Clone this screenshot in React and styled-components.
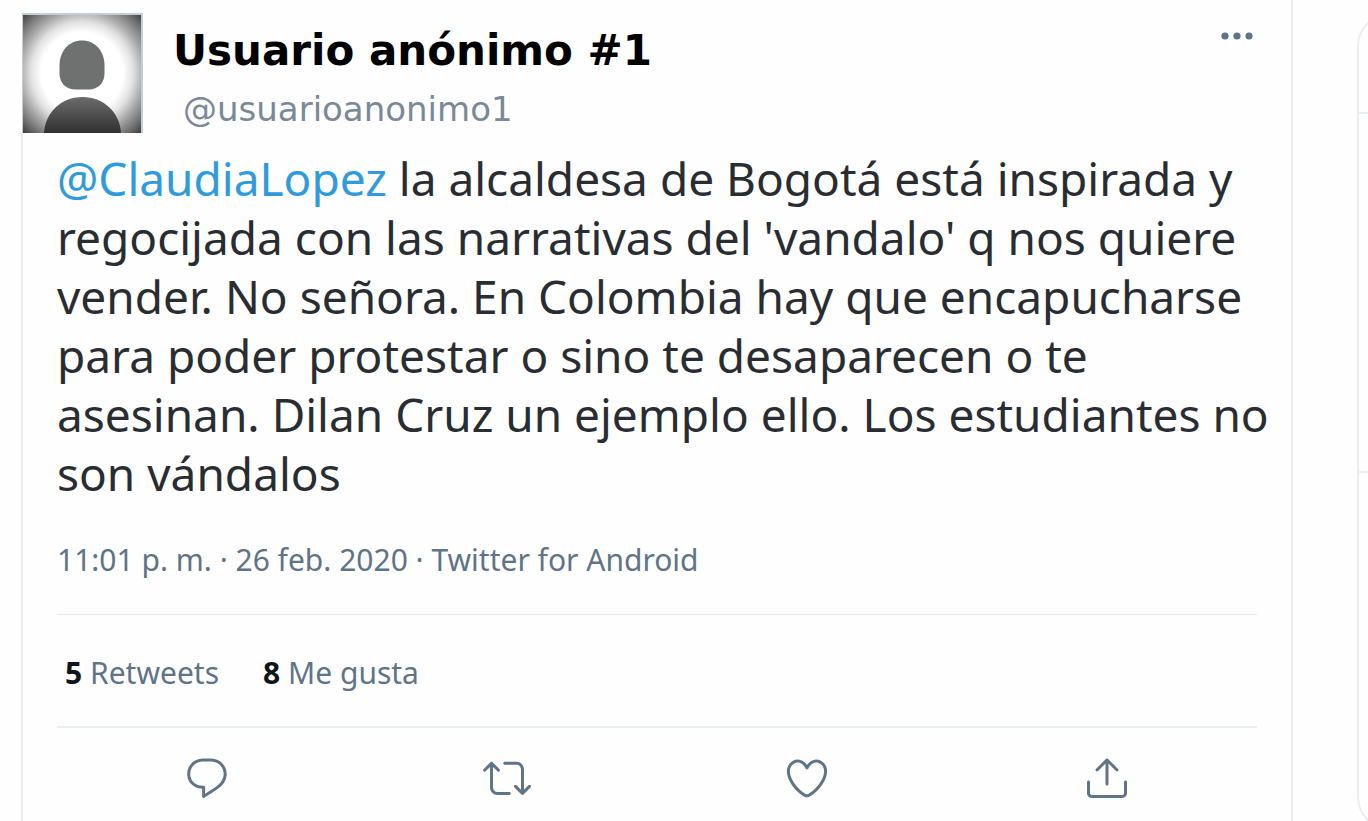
import React from "react"
import styled, { createGlobalStyle } from "styled-components"

const slate = "#5f7487"
const line = "#ebeef0"

const GlobalStyle = createGlobalStyle`
  * {
    box-sizing: border-box;
  }

  body {
    margin: 0;
    overflow: hidden;
    background-color: #fefefe;
    color: #292d32;
    font-family: "Noto Sans", "Open Sans", sans-serif;
  }
`

const Page = styled.div`
  display: flex;
  gap: 64px;
  height: 100vh;
  padding-left: 21px;
  overflow: hidden;
`

const Tweet = styled.article`
  flex: 1;
  min-width: 0;
  display: flex;
  flex-direction: column;
  border-right: 2px solid ${line};
`

const Header = styled.header`
  display: flex;
  align-items: flex-start;
  padding: 13px 36px 0 1px;
`

const Avatar = styled.svg`
  flex: none;
  display: block;
  width: 121px;
  height: 120px;
`

const Names = styled.div`
  flex: 1;
  padding: 2px 0 0 30px;
  font-family: "DejaVu Sans", Verdana, sans-serif;
`

const DisplayName = styled.h1`
  margin: 0;
  color: #000;
  font-size: 42px;
  line-height: 72px;
  font-weight: bold;
`

const Handle = styled.a`
  display: block;
  padding-left: 10px;
  color: #7a8998;
  font-size: 34px;
  line-height: 44px;
  text-decoration: none;
`

const IconButton = styled.button`
  display: flex;
  padding: 0;
  border: 0;
  background: none;
  color: ${slate};
  cursor: pointer;

  svg {
    display: block;
    width: ${props => props.$size}px;
    height: ${props => props.$size}px;
    fill: currentColor;
  }
`

const Content = styled.div`
  flex: 1;
  padding: 16px 34px 0;
  border-left: 2px solid ${line};
`

const TweetText = styled.p`
  margin: 0;
  font-size: 46px;
  line-height: 59px;
  white-space: nowrap;
`

const TextLine = styled.span`
  display: block;
`

const Mention = styled.a`
  color: #2f9bdc;
  text-decoration: none;
`

const Meta = styled.div`
  padding: 35px 0 32px;
  border-bottom: 1px solid #e4e9ec;
  color: ${slate};
  font-size: 30px;
  line-height: 44px;
`

const Stats = styled.div`
  display: flex;
  gap: 44px;
  padding: 36px 8px 31px;
  border-bottom: 2px solid ${line};
`

const Stat = styled.a`
  color: ${slate};
  font-size: 30px;
  line-height: 44px;
  text-decoration: none;

  strong {
    color: #0f1419;
  }
`

const Actions = styled.div`
  display: grid;
  grid-template-columns: repeat(4, 1fr);
  justify-items: center;
  padding-top: 26px;
`

const Sidebar = styled.aside`
  flex: 0 0 11px;
  padding-top: 14px;
  overflow: hidden;
`

const Panel = styled.div`
  width: 700px;
  border: 2px solid ${line};
  border-radius: 32px;
`

const PanelRow = styled.div`
  height: ${props => props.$height}px;
  border-bottom: ${props => (props.$last ? 0 : 2)}px solid ${line};
`

const textLines = [
  "regocijada con las narrativas del 'vandalo' q nos quiere",
  "vender. No señora. En Colombia hay que encapucharse",
  "para poder protestar o sino te desaparecen o te",
  "asesinan. Dilan Cruz un ejemplo ello. Los estudiantes no",
  "son vándalos",
]

const stats = [
  { count: 5, label: "Retweets" },
  { count: 8, label: "Me gusta" },
]

const actions = [
  {
    label: "Responder",
    paths: [
      "M14.046 2.242l-4.148-.01h-.002c-4.374 0-7.8 3.427-7.8 7.802 0 4.098 3.186 7.206 7.465 7.37v3.828c0 .108.044.286.12.403.142.225.384.347.632.347.138 0 .277-.038.402-.118.264-.168 6.473-4.14 8.088-5.506 1.902-1.61 3.04-3.97 3.043-6.312v-.017c-.006-4.367-3.43-7.787-7.8-7.788zm3.787 12.972c-1.134.96-4.862 3.405-6.772 4.643V16.67c0-.414-.335-.75-.75-.75h-.396c-3.66 0-6.318-2.476-6.318-5.886 0-3.534 2.768-6.302 6.3-6.302l4.147.01h.002c3.532 0 6.3 2.766 6.302 6.296-.003 1.91-.942 3.844-2.514 5.176z",
    ],
  },
  {
    label: "Retwittear",
    paths: [
      "M23.77 15.67c-.292-.293-.767-.293-1.06 0l-2.22 2.22V7.65c0-2.068-1.683-3.75-3.75-3.75h-5.85c-.414 0-.75.336-.75.75s.336.75.75.75h5.85c1.24 0 2.25 1.01 2.25 2.25v10.24l-2.22-2.22c-.293-.293-.768-.293-1.06 0s-.294.768 0 1.06l3.5 3.5c.145.147.337.22.53.22s.383-.072.53-.22l3.5-3.5c.294-.292.294-.767 0-1.06zm-10.66 3.28H7.26c-1.24 0-2.25-1.01-2.25-2.25V6.46l2.22 2.22c.148.147.34.22.532.22s.384-.073.53-.22c.293-.293.293-.768 0-1.06l-3.5-3.5c-.293-.294-.768-.294-1.06 0l-3.5 3.5c-.294.292-.294.767 0 1.06s.767.293 1.06 0l2.22-2.22V16.7c0 2.068 1.683 3.75 3.75 3.75h5.85c.414 0 .75-.336.75-.75s-.337-.75-.75-.75z",
    ],
  },
  {
    label: "Me gusta",
    paths: [
      "M12 21.638h-.014C9.403 21.59 1.95 14.856 1.95 8.478c0-3.064 2.525-5.754 5.403-5.754 2.29 0 3.83 1.58 4.646 2.73.814-1.148 2.354-2.73 4.645-2.73 2.88 0 5.404 2.69 5.404 5.755 0 6.376-7.454 13.11-10.037 13.157H12zM7.354 4.225c-2.08 0-3.903 1.988-3.903 4.255 0 5.74 7.034 11.596 8.55 11.658 1.518-.062 8.55-5.917 8.55-11.658 0-2.267-1.823-4.255-3.903-4.255-2.528 0-3.94 2.936-3.952 2.965-.23.562-1.156.562-1.387 0-.014-.03-1.425-2.965-3.954-2.965z",
    ],
  },
  {
    label: "Compartir",
    paths: [
      "M17.53 7.47l-5-5c-.293-.293-.768-.293-1.06 0l-5 5c-.294.293-.294.768 0 1.06s.767.294 1.06 0l3.72-3.72V15c0 .414.336.75.75.75s.75-.336.75-.75V4.81l3.72 3.72c.146.147.338.22.53.22s.384-.072.53-.22c.293-.293.293-.767 0-1.06z",
      "M19.708 21.944H4.292C3.028 21.944 2 20.916 2 19.652V14c0-.414.336-.75.75-.75s.75.336.75.75v5.652c0 .437.355.792.792.792h15.416c.437 0 .792-.355.792-.792V14c0-.414.336-.75.75-.75s.75.336.75.75v5.652c0 1.264-1.028 2.292-2.292 2.292z",
    ],
  },
]

function AnonymousAvatar() {
  return (
    <Avatar viewBox="0 0 121 120" aria-hidden="true">
      <defs>
        <radialGradient id="glow" gradientUnits="userSpaceOnUse" cx="60" cy="60" r="85">
          <stop offset="0.48" stopColor="#fff" />
          <stop offset="0.6" stopColor="#e2e2e2" />
          <stop offset="0.72" stopColor="#acacac" />
          <stop offset="0.86" stopColor="#747474" />
          <stop offset="1" stopColor="#363636" />
        </radialGradient>
        <linearGradient id="torso" x1="0" y1="0" x2="0" y2="1">
          <stop offset="0" stopColor="#6c6c6c" />
          <stop offset="1" stopColor="#303030" />
        </linearGradient>
      </defs>
      <rect width="121" height="120" fill="#c3ced7" />
      <rect x="1" y="2" width="118" height="118" fill="url(#glow)" />
      <path
        d="M60 27.500c13 0 22.500 10.500 22.500 25v8c0 9-6 16-16 16h-13c-10 0-16-7-16-16v-8c0-14.500 9.500-25 22.500-25z"
        fill="#6f7170"
      />
      <path d="M22 120c1-20 17-36 38.500-36s37.500 16 38.500 36z" fill="url(#torso)" />
    </Avatar>
  )
}

function App() {
  return (
    <>
      <GlobalStyle />
      <Page>
        <Tweet>
          <Header>
            <AnonymousAvatar />
            <Names>
              <DisplayName>Usuario anónimo #1</DisplayName>
              <Handle href="#perfil">@usuarioanonimo1</Handle>
            </Names>
            <IconButton $size={36} aria-label="Más opciones">
              <svg viewBox="0 0 36 36">
                <circle cx="6" cy="23" r="3.600" />
                <circle cx="18" cy="23" r="3.600" />
                <circle cx="30" cy="23" r="3.600" />
              </svg>
            </IconButton>
          </Header>

          <Content>
            <TweetText>
              <TextLine>
                <Mention href="#claudialopez">@ClaudiaLopez</Mention>
                <span> la alcaldesa de Bogotá está inspirada y</span>
              </TextLine>
              {textLines.map(text => (
                <TextLine key={text}>{text}</TextLine>
              ))}
            </TweetText>
            <Meta>11:01 p. m. · 26 feb. 2020 · Twitter for Android</Meta>
            <Stats>
              {stats.map(stat => (
                <Stat key={stat.label} href="#actividad">
                  <strong>{stat.count}</strong> {stat.label}
                </Stat>
              ))}
            </Stats>
            <Actions>
              {actions.map(action => (
                <IconButton key={action.label} $size={48} aria-label={action.label}>
                  <svg viewBox="0 0 24 24">
                    {action.paths.map(d => (
                      <path key={d} d={d} />
                    ))}
                  </svg>
                </IconButton>
              ))}
            </Actions>
          </Content>
        </Tweet>

        <Sidebar>
          <Panel>
            <PanelRow $height={98} />
            <PanelRow $height={359} />
            <PanelRow $height={354} $last />
          </Panel>
        </Sidebar>
      </Page>
    </>
  )
}

export default App
